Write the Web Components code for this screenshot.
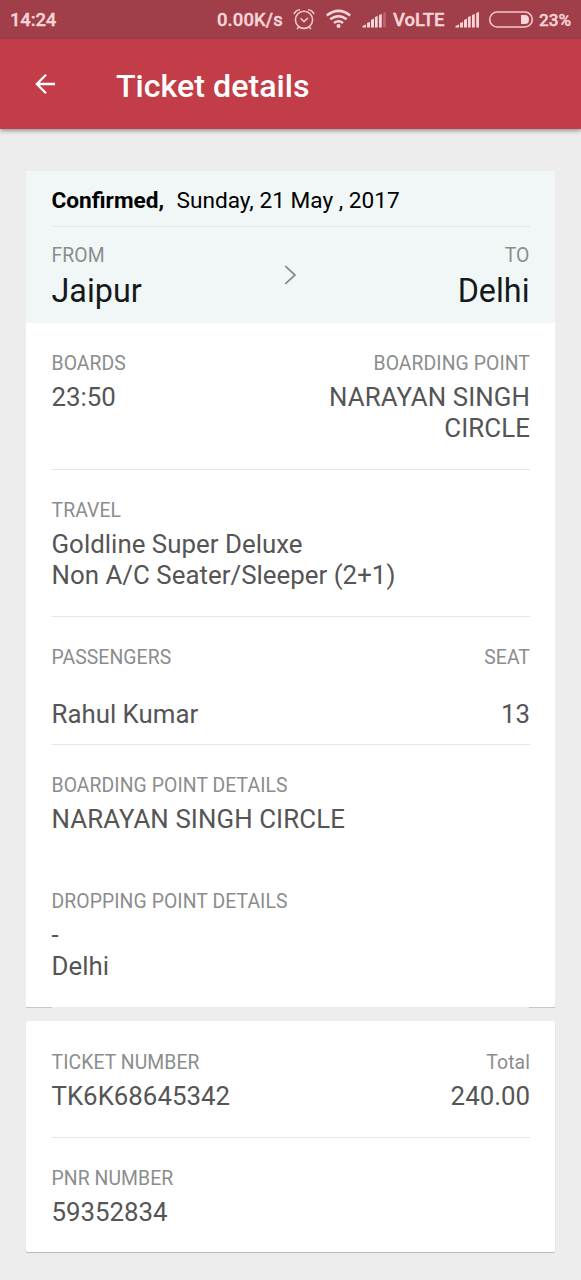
<!DOCTYPE html>
<html lang="en">
<head>
<meta charset="utf-8">
<title>Ticket details</title>
<style>
html,body{margin:0;background:#ededed}
body{font-family:Roboto,"Liberation Sans",sans-serif;color:#555}
</style>
</head>
<body>
<ticket-screen></ticket-screen>
<script>
function define(name, html){
  const t=document.createElement('template');
  t.innerHTML=html;
  customElements.define(name,class extends HTMLElement{
    constructor(){super();this.attachShadow({mode:'open'}).append(t.content.cloneNode(true));}
  });
}

define('status-bar',`<style>
:host{display:flex;height:39px;background:#a03e4a;color:#f8d5d8;font-weight:500;font-size:18.5px;line-height:41px;white-space:nowrap;-webkit-text-stroke:.35px #f8d5d8}
span,svg{flex:none;display:block}
svg{height:39px}
</style>
<span style="width:207px;margin-left:10px;letter-spacing:-.15px">14:24</span>
<span style="width:75px;letter-spacing:.1px">0.00K/s</span>
<svg width="32" viewBox="292 0 32 39" fill="none" stroke="#f4c6ca" stroke-width="1.6"><circle cx="304" cy="19.8" r="8.600"/><path d="M300.500 18.200l3.500 3.400 4-3.600M294 14q2-4 6-4.300M314 14q-2-4-6-4.300M299 27l-2 2M309 27l2 2"/></svg>
<svg width="34" viewBox="324 0 34 39" fill="none" stroke="#f8d5d8" stroke-width="2.500"><path d="M326.800 15.500q11.700-9.200 23.400 0M330.300 19.300q8.200-6.400 16.400 0M334 23q4.500-3.500 9 0"/><circle cx="338.500" cy="26" r="2" fill="#f8d5d8" stroke="none"/></svg>
<svg width="35" viewBox="358 0 35 39" fill="#f8d5d8"><path d="M362.500 27.500v-1.500l3.500-1.500v3zM367 27.500v-4.500l3-1v5.500zM371 27.500v-7.500l3-1.500v9zM375 27.500v-10.500l2.700-1v11.500zM379 27.500v-12.500l2.800-1v13.500z"/><path d="M383.200 27.500v-14.500l2.600-1v15.500z" fill="#bd6470"/></svg>
<span style="width:58px">VoLTE</span>
<svg width="34" viewBox="451 0 34 39" fill="#f8d5d8"><path d="M455.500 27.500v-1.500l3.500-1.500v3zM460 27.500v-4.500l3-1v5.500zM464 27.500v-7.500l3-1.500v9zM468 27.500v-10.500l2.700-1v11.500zM472 27.500v-12.500l2.800-1v13.500zM476.200 27.500v-14.500l2.800-1v15.500z"/></svg>
<svg width="54" viewBox="485 0 54 39"><rect x="489.700" y="12" width="42.600" height="15" rx="7.500" fill="none" stroke="#f4c6ca" stroke-width="1.600"/><path d="M521 15h4q4 0 4 4.500t-4 4.500h-4z" fill="#f8d5d8"/></svg>
<span style="font-size:17.200px">23%</span>`);

define('app-bar',`<style>
:host{display:flex;align-items:center;height:90px;box-sizing:border-box;background:#c23d48;color:#fff;position:relative;box-shadow:0 2px 4px rgba(0,0,0,.36)}
svg{display:block;flex:none;width:116px;height:90px}
div{font-weight:500;font-size:32.200px;line-height:38px;padding-top:3px;white-space:nowrap}
</style>
<svg viewBox="0 39 116 90" fill="none" stroke="#fff" stroke-width="2.300"><path d="M55 84H37M46 74.800L36.800 84l9.200 9.200"/></svg>
<div><slot></slot></div>`);

define('info-field',`<style>
:host{display:block;white-space:nowrap;margin-left:-.5px}
:host([end]){text-align:right;margin-right:-.5px}
.l{font-size:19.370px;line-height:24px;color:#8b8d8d;letter-spacing:.08px}
.v{font-size:25.830px;line-height:31px;margin-top:var(--gap,6px);color:#555;letter-spacing:var(--track,0)}
:host([city]) .v{font-size:32.300px;line-height:38px;margin-top:4px;color:#15191b}
</style>
<div class="l"><slot name="label"></slot></div><div class="v"><slot></slot></div>`);

define('info-row',`<style>
:host{display:flex;justify-content:space-between;align-items:flex-start;box-sizing:border-box;margin:0 25.5px 0 26px;border-bottom:1px solid #e6e6e6}
:host([plain]){border-bottom-color:transparent}
</style><slot></slot>`);

define('trip-head',`<style>
:host{display:block;height:152px;background:#f1f7f7}
.d{height:56px;box-sizing:border-box;margin:0 25.5px 0 26px;border-bottom:1px solid #e2e8e8;color:#000;font-size:22.650px;line-height:59px;white-space:nowrap;display:flex}
b{font-weight:700;width:125px;margin-left:-.5px}
.r{display:flex;justify-content:space-between;margin:0 26px;padding-top:17px}
svg{display:block;flex:none;margin-top:19px;width:14px;height:22px}
.a{width:231px}.b{width:232px}
</style>
<div class="d"><b><slot name="status"></slot></b><slot name="date"></slot></div>
<div class="r"><div class="a"><slot name="from"></slot></div><svg viewBox="283 263 14 22" fill="none" stroke="#858a8b" stroke-width="1.800"><path d="M285.300 266.200l9.700 8.800-9.700 8.800"/></svg><div class="b"><slot name="to"></slot></div></div>`);

define('ticket-card',`<style>
:host{display:block;margin:0 26px;background:#fff;border-radius:2px;box-shadow:0 1px 1px rgba(0,0,0,.22)}
</style><slot></slot>`);

define('ticket-screen',`<style>
:host{display:block;height:1280px;overflow:hidden;background:#ededed}
.one{margin-top:42px;height:836px;box-shadow:none;position:relative}
.one::before,.one::after{content:"";position:absolute;bottom:-1px;height:1px;width:26px;background:#c6c6c6}
.one::before{left:0}.one::after{right:0}
.two{margin-top:14px;height:231px}
</style>
<status-bar></status-bar>
<app-bar>Ticket details</app-bar>
<ticket-card class="one">
<trip-head><span slot="status">Confirmed,</span><span slot="date">Sunday, 21 May , 2017</span>
<info-field slot="from" city><span slot="label">FROM</span>Jaipur</info-field>
<info-field slot="to" city end><span slot="label">TO</span>Delhi</info-field></trip-head>
<info-row style="height:147px;padding-top:29px"><info-field><span slot="label">BOARDS</span>23:50</info-field><info-field end style="--track:.08px"><span slot="label">BOARDING POINT</span>NARAYAN SINGH<br>CIRCLE</info-field></info-row>
<info-row style="height:147px;padding-top:29px"><info-field style="--track:.03px"><span slot="label">TRAVEL</span>Goldline Super Deluxe<br>Non A/C Seater/Sleeper (2+1)</info-field></info-row>
<info-row style="height:128px;padding-top:29px;--gap:29px"><info-field><span slot="label">PASSENGERS</span>Rahul Kumar</info-field><info-field end><span slot="label">SEAT</span>13</info-field></info-row>
<info-row plain style="height:116px;padding-top:29px"><info-field style="--track:.1px"><span slot="label">BOARDING POINT DETAILS</span>NARAYAN SINGH CIRCLE</info-field></info-row>
<info-row plain style="height:146px;padding-top:29px"><info-field><span slot="label">DROPPING POINT DETAILS</span>-<br>Delhi</info-field></info-row>
</ticket-card>
<ticket-card class="two">
<info-row style="height:117px;padding-top:30px"><info-field><span slot="label">TICKET NUMBER</span>TK6K68645342</info-field><info-field end><span slot="label">Total</span>240.00</info-field></info-row>
<info-row plain style="height:114px;padding-top:29px"><info-field><span slot="label">PNR NUMBER</span>59352834</info-field></info-row>
</ticket-card>`);
</script>
</body>
</html>
